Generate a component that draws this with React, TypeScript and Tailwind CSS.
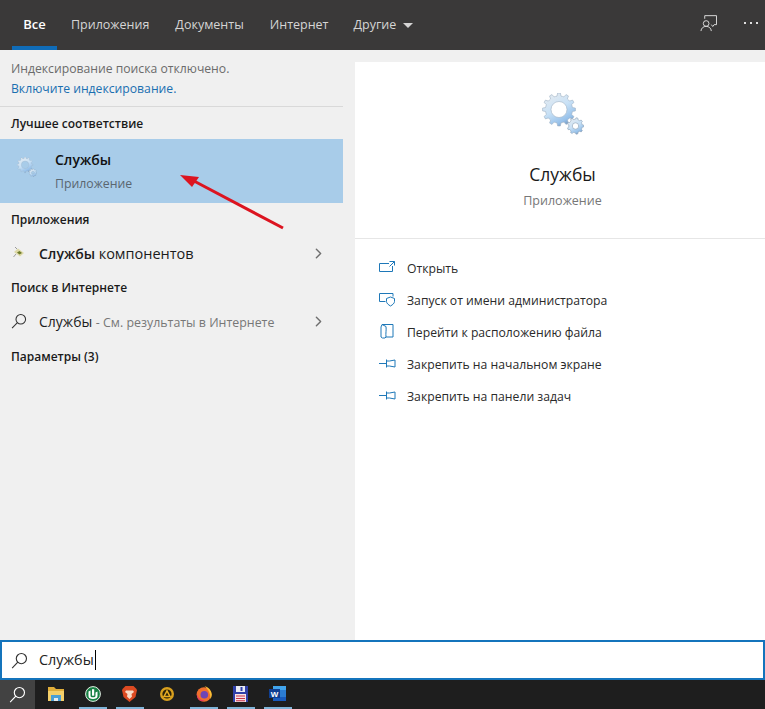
import { ChevronRight } from "lucide-react";

const font = { fontFamily: '"Open Sans", "Noto Sans", sans-serif' };

// Контур шестерёнки с отверстием (fill-rule evenodd)
const gearPath = (cx: number, cy: number, r: number, hole: number, teeth: number) => {
  const inner = r * 0.82;
  const step = (Math.PI * 2) / teeth;
  const pts: string[] = [];
  for (let i = 0; i < teeth; i++) {
    const a = i * step;
    const list: [number, number][] = [
      [inner, a - step * 0.5],
      [inner, a - step * 0.28],
      [r, a - step * 0.16],
      [r, a + step * 0.16],
      [inner, a + step * 0.28],
    ];
    list.forEach(([rad, t]) => {
      pts.push(`${(cx + rad * Math.cos(t)).toFixed(2)} ${(cy + rad * Math.sin(t)).toFixed(2)}`);
    });
  }
  const ring = `M${pts.join("L")}Z`;
  const circle = `M${cx - hole} ${cy}a${hole} ${hole} 0 1 0 ${hole * 2} 0a${hole} ${hole} 0 1 0 ${-hole * 2} 0Z`;
  return ring + circle;
};

const Gears = ({ size, id }: { size: number; id: string }) => (
  <svg width={size} height={size} viewBox="0 0 42 42">
    <defs>
      <linearGradient id={id} x1="0.15" y1="0" x2="0.7" y2="1">
        <stop offset="0" stopColor="#e8ecf0" />
        <stop offset="0.5" stopColor="#c8e1f6" />
        <stop offset="0.85" stopColor="#97c1ea" />
        <stop offset="1" stopColor="#7596bb" />
      </linearGradient>
    </defs>
    <path d={gearPath(17, 16.5, 16.5, 8, 12)} fill={`url(#${id})`} fillRule="evenodd" stroke="#9fb2c4" strokeWidth="0.6" />
    <path d={gearPath(33.5, 33, 8.2, 3.2, 9)} fill={`url(#${id})`} fillRule="evenodd" stroke="#8a9fb5" strokeWidth="0.6" />
  </svg>
);

const SearchIcon = ({ color = "#333333", size = 18 }: { color?: string; size?: number }) => (
  <svg width={size} height={size} viewBox="0 0 18 18" fill="none" stroke={color} strokeWidth="1.2">
    <circle cx="11" cy="7" r="5.4" />
    <path d="M7.2 10.8 1.2 17" />
  </svg>
);

const pin = <path d="M0 7.500h7M7.500 3.500v8M7.500 5h3l5.500-1v7l-5.500-1h-3" />;

const actions = [
  {
    label: "Открыть",
    icon: <path d="M.5 3.500h9.500M.5 3.500v8h13V6M10.500 1.500h5v4M15.500 1.500l-5 5" />,
  },
  {
    label: "Запуск от имени администратора",
    icon: <path d="M.5 1.500h13.500v3M.5 1.500v8h6M7.500 6.500l4-1.500 4 1.500v3c0 1.800-1.800 3.200-4 4.500-2.200-1.300-4-2.700-4-4.500z" />,
  },
  {
    label: "Перейти к расположению файла",
    icon: <path d="M3 .5h11v12.500H7M3 .5 2 3v10l1.500 1h2.500l1-1M3 .5l4 2c.5 3.500-.5 7 0 10.500" />,
  },
  { label: "Закрепить на начальном экране", icon: pin },
  { label: "Закрепить на панели задач", icon: pin },
];

const taskbarApps = [
  { running: false, icon: (
    <svg width="16" height="14" viewBox="0 0 16 14">
      <path d="M0 0h6l2 2h8v3H0z" fill="#e0ae3a" />
      <path d="M0 4h16v10H0z" fill="#f4cf6a" />
      <path d="M3 8h10v6H3z" fill="#4a9fd6" />
      <path d="M6 11h4v3H6z" fill="#e9edf0" />
    </svg>
  ) },
  { running: true, icon: (
    <svg width="16" height="16" viewBox="0 0 16 16">
      <circle cx="8" cy="8" r="7.400" fill="#178044" stroke="#e3efe5" strokeWidth="1" />
      <path d="M3.500 5.500 5.500 4.500v5.200c0 1 1 1.500 2.500 1.500s2.500-.5 2.500-1.500V6.500l2-1v4.500c0 2.200-1.800 3-4.500 3s-4.500-.8-4.500-3z" fill="#ffffff" />
      <path d="M7 3.200h2.200v6.500H7z" fill="#ffffff" />
    </svg>
  ) },
  { running: true, icon: (
    <svg width="15" height="16" viewBox="0 0 15 16">
      <path d="M3.500 0h8L14 2.500l1 1.500-1.500 7L7.500 16 1.500 11 0 4l1-1.500z" fill="#dc4a22" />
      <path d="M4 4.500h7l1 1.500-2.500 2 .5 2.500-2.500 2.500-2.500-2.500.5-2.500L3 6z" fill="#f9dcc8" />
    </svg>
  ) },
  { running: false, icon: (
    <svg width="14" height="14" viewBox="0 0 14 14">
      <circle cx="7" cy="7" r="7" fill="#d9a01e" />
      <circle cx="7" cy="7" r="4.600" fill="#2a2108" />
      <path d="M7 3.800 10 9.500H4z" fill="none" stroke="#e9ad22" strokeWidth="1.500" />
    </svg>
  ) },
  { running: true, icon: (
    <svg width="16" height="16" viewBox="0 0 16 16">
      <circle cx="8" cy="8.500" r="7.300" fill="#f0702c" />
      <path d="M8.500 0c3 1 7 3.500 7.300 8.500 0 2-.8 3.500-1.800 4.500C15 9 13 4 8.500 0z" fill="#fcbf35" />
      <circle cx="8.300" cy="8.800" r="3.800" fill="#6f45b5" />
      <path d="M.8 7c.5 4 3.500 7.500 8 7.500-3.500 2-8.500-.5-8-7.500z" fill="#e63a5f" />
    </svg>
  ) },
  { running: true, icon: (
    <svg width="15" height="16" viewBox="0 0 15 16">
      <path d="M0 0h15v16H0z" fill="#2f3fa8" />
      <path d="M3 0h9v6H3z" fill="#e9ebf5" />
      <path d="M7.500 1h2v4h-2z" fill="#2f3fa8" />
      <path d="M2 8h11v8H2z" fill="#f6e3e7" />
      <path d="M3 9.500h9v1H3zM3 12h9v1H3zM3 14.300h9v1H3z" fill="#c8324a" />
    </svg>
  ) },
  { running: true, icon: (
    <svg width="17" height="15" viewBox="0 0 17 15">
      <path d="M4 0h13v15H4z" fill="#2b7cd3" />
      <path d="M4 0h13v4H4z" fill="#41a5ee" />
      <path d="M4 11h13v4H4z" fill="#185abd" />
      <path d="M0 3h11v9H0z" fill="#103f91" />
      <text x="5.500" y="10.500" textAnchor="middle" fontSize="8" fontWeight="700" fill="#ffffff" fontFamily="Liberation Sans, sans-serif">W</text>
    </svg>
  ) },
];

const SectionTitle = ({ children }: { children: React.ReactNode }) => (
  <div className="px-[11px] text-[12px] leading-[17px] font-semibold text-[#1a1a1a]">{children}</div>
);

export default function App() {
  return (
    <div className="relative flex h-[709px] w-[765px] flex-col overflow-hidden bg-[#f0f0f0]" style={font}>
      {/* Вкладки */}
      <div className="flex h-[50px] shrink-0 items-stretch bg-[#3a3939] text-[12.500px] text-[#d5d5d5]">
        <div className="ml-[12px] flex w-[45px] items-center justify-center border-b-[4px] border-[#0f6cb8] pt-[3px] text-[13px] font-semibold text-white">Все</div>
        <div className="ml-[14px] flex items-center">Приложения</div>
        <div className="ml-[26px] flex items-center">Документы</div>
        <div className="ml-[26px] flex items-center">Интернет</div>
        <div className="ml-[25px] flex items-center gap-[7px]">
          Другие
          <span className="h-0 w-0 border-x-[5px] border-t-[5px] border-x-transparent border-t-[#d5d5d5]" />
        </div>
        <div className="ml-auto flex items-center gap-[27px] pr-[7px] pb-[4px]">
          <svg width="17" height="17" viewBox="0 0 18 18" fill="none" stroke="#e0e0e0" strokeWidth="1">
            <path d="M5 4V.7h12.500v9.500H15l-1.500 2-1.500-2" />
            <circle cx="6.500" cy="9" r="3" />
            <path d="M1 17c.3-3 2.500-5 5.500-5s5.200 2 5.500 5" />
          </svg>
          <div className="flex gap-[4px]">
            <span className="h-[2px] w-[2px] bg-[#e0e0e0]" />
            <span className="h-[2px] w-[2px] bg-[#e0e0e0]" />
            <span className="h-[2px] w-[2px] bg-[#e0e0e0]" />
          </div>
        </div>
      </div>

      <div className="flex min-h-0 flex-1">
        {/* Левая колонка */}
        <div className="flex w-[343px] shrink-0 flex-col">
          <div className="h-[57px] shrink-0 border-b border-[#d9d9d9] px-[11px] pt-[9px] text-[12.200px] leading-[20px]">
            <div className="text-[#6b6b6b]">Индексирование поиска отключено.</div>
            <div className="text-[#1a6fb0]">Включите индексирование.</div>
          </div>
          <div className="flex h-[32px] shrink-0 items-center">
            <SectionTitle>Лучшее соответствие</SectionTitle>
          </div>
          <div className="flex h-[64px] shrink-0 items-center bg-[#a8cce9] pl-[17px]">
            <div className="-mt-[8px]">
              <Gears size={20} id="gear-small" />
            </div>
            <div className="ml-[18px]">
              <div className="text-[14px] leading-[20px] font-semibold text-[#111111]">Службы</div>
              <div className="mt-[5px] text-[12.300px] leading-[18px] text-[#5a6670]">Приложение</div>
            </div>
          </div>
          <div className="flex h-[33px] shrink-0 items-center">
            <SectionTitle>Приложения</SectionTitle>
          </div>
          <div className="flex h-[35px] shrink-0 items-center pl-[13px] pr-[16px]">
            <svg width="12" height="11" viewBox="0 0 12 11" className="-mt-[3px]">
              <path d="M1 5l4-3.500 6 4.500-4 3.500z" fill="#ddd9a8" />
              <path d="M4 5.500l2.500-1.500 2.500 2-2.500 1.500z" fill="#6d7a2a" />
              <path d="M2 0l2 2M.5 10l2.500-3" stroke="#9a9a9a" strokeWidth="1" />
            </svg>
            <div className="ml-[14px] flex-1 text-[14px] text-[#1c1c1c]">
              <span className="font-semibold">Службы</span> <span className="text-[14.500px]">компонентов</span>
            </div>
            <ChevronRight size={17} strokeWidth={2} className="text-[#6f6f6f]" />
          </div>
          <div className="flex h-[32px] shrink-0 items-center">
            <SectionTitle>Поиск в Интернете</SectionTitle>
          </div>
          <div className="flex h-[36px] shrink-0 items-center pl-[11px] pr-[16px]">
            <SearchIcon size={16} />
            <div className="ml-[12px] flex-1 pt-[1px] text-[14px] text-[#1c1c1c]">
              Службы <span className="text-[12.400px] text-[#777777]">- См. результаты в Интернете</span>
            </div>
            <ChevronRight size={17} strokeWidth={2} className="text-[#6f6f6f]" />
          </div>
          <div className="flex h-[33px] shrink-0 items-center pt-[2px]">
            <SectionTitle>Параметры (3)</SectionTitle>
          </div>
        </div>

        {/* Правая панель */}
        <div className="ml-[12px] mt-[12px] flex flex-1 flex-col bg-white">
          <div className="flex h-[177px] shrink-0 flex-col items-center border-b border-[#e6e6e6] pl-[5px] pt-[31px]">
            <Gears size={42} id="gear-big" />
            <div className="mt-[28px] text-[17.500px] leading-[22px] text-[#1a1a1a]">Службы</div>
            <div className="mt-[7px] text-[12.500px] leading-[18px] text-[#777777]">Приложение</div>
          </div>
          <div className="flex flex-col pl-[24px] pt-[14px]">
            {actions.map((a) => (
              <div key={a.label} className="flex h-[32px] items-center">
                <svg width="17" height="15" viewBox="0 0 17 15" fill="none" stroke="#1e78b8" strokeWidth="1" className="-mt-[4px]">
                  {a.icon}
                </svg>
                <span className="ml-[11px] text-[12.200px] text-[#2a2a2a]">{a.label}</span>
              </div>
            ))}
          </div>
        </div>
      </div>

      {/* Строка поиска */}
      <div className="flex h-[40px] shrink-0 items-center border-2 border-[#1474bc] bg-white pl-[9px]">
        <SearchIcon size={17} />
        <span className="ml-[11px] border-r border-black pr-px text-[14.400px] leading-[20px] text-[#222222]">Службы</span>
      </div>

      {/* Панель задач */}
      <div className="flex h-[29px] shrink-0 items-stretch bg-[#1e1e1e]">
        <div className="flex w-[35px] items-center justify-center bg-[#424242]">
          <SearchIcon color="#ffffff" size={17} />
        </div>
        <div className="ml-[2px] flex">
          {taskbarApps.map((app, i) => (
            <div key={i} className="flex w-[37px] flex-col items-center">
              <div className="flex flex-1 items-center justify-center">{app.icon}</div>
              <span className={app.running ? "h-[2px] w-[28px] bg-[#7fb4d8]" : "h-[2px] w-[28px]"} />
            </div>
          ))}
        </div>
      </div>

      {/* Красная стрелка поверх интерфейса */}
      <svg className="absolute left-[170px] top-[165px]" width="125" height="75" viewBox="0 0 125 75">
        <path d="M113 63 24 16" stroke="#dc1420" strokeWidth="3" fill="none" />
        <path d="M10 10 29 12 22 22z" fill="#dc1420" />
      </svg>
    </div>
  );
}
